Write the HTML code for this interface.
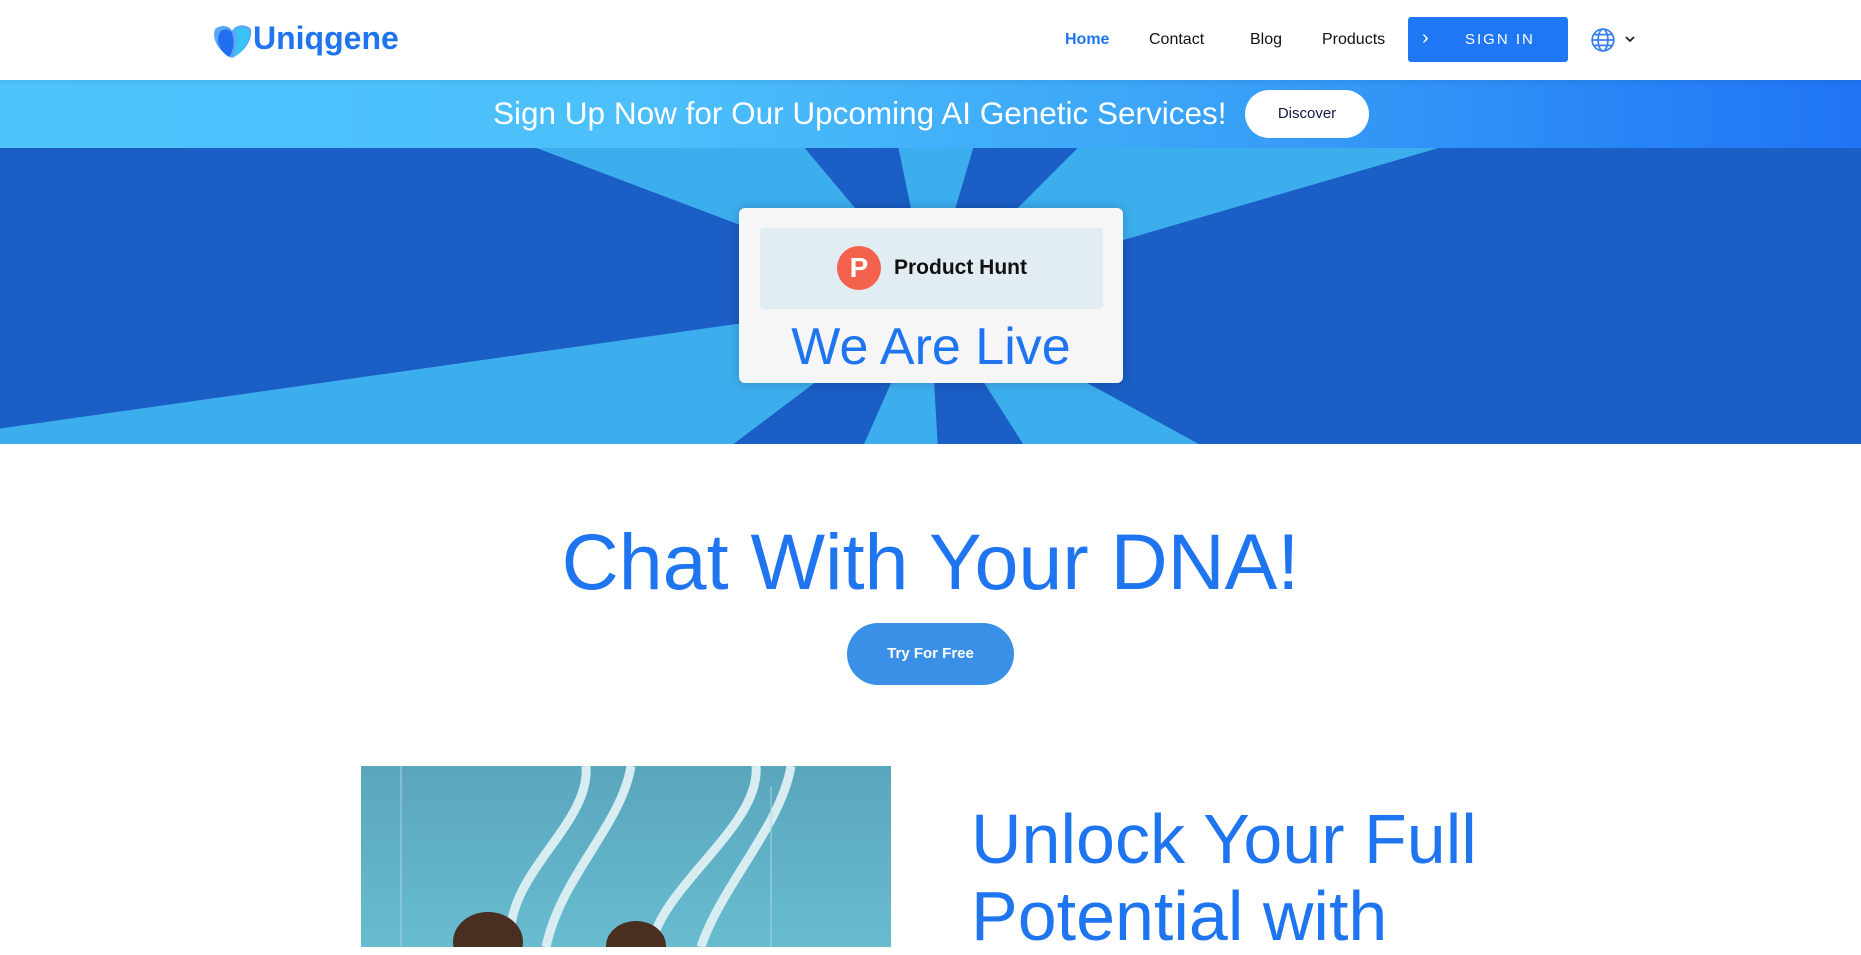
<!DOCTYPE html>
<html><head><meta charset="utf-8"><style>
*{margin:0;padding:0;box-sizing:border-box}
body{width:1861px;height:947px;overflow:hidden;background:#fff;font-family:"Liberation Sans",sans-serif;position:relative}
.abs{position:absolute}
nav a{position:absolute;top:31px;font-size:16px;color:#111;text-decoration:none}
</style></head><body>
<div class="abs" style="left:0;top:0;width:1861px;height:80px;background:#fff;box-shadow:0 2px 6px rgba(0,0,0,.08);z-index:2"></div>
<svg class="abs" style="left:211px;top:23px;z-index:3" width="42" height="36" viewBox="0 0 42 36">
<path d="M4 6 C12 0 20 4 21 8 C24 2 34 0 40 6 C42 18 32 30 21 35 C10 30 0 18 4 6Z" fill="#5aa6f7"/>
<path d="M10 8 C16 4 22 8 22 14 C24 24 20 32 18 34 C8 28 4 16 10 8Z" fill="#1f6ff0"/>
<path d="M24 6 C32 2 40 6 38 14 C36 24 28 32 22 34 C26 24 28 14 24 6Z" fill="#38c2f5"/>
</svg>
<div class="abs" style="left:253px;top:20px;font-size:32px;font-weight:bold;color:#1f74f0;z-index:3">Uniqgene</div>
<nav style="position:absolute;left:0;top:0;z-index:3">
<a style="left:1065px;color:#1f74f0;font-weight:bold">Home</a>
<a style="left:1149px">Contact</a>
<a style="left:1250px">Blog</a>
<a style="left:1322px">Products</a>
</nav>
<div class="abs" style="left:1408px;top:17px;width:160px;height:45px;background:#1f77f5;border-radius:3px;z-index:3;color:#fff;font-size:15px;letter-spacing:2px">
<span class="abs" style="left:14px;top:10px;font-size:20px;font-weight:100">›</span>
<span class="abs" style="left:57px;top:14px">SIGN IN</span></div>
<svg class="abs" style="left:1590px;top:27px;z-index:3" width="26" height="26" viewBox="0 0 24 24" fill="none" stroke="#3b7ff0" stroke-width="1.6">
<circle cx="12" cy="12" r="10"/><ellipse cx="12" cy="12" rx="4.5" ry="10"/><path d="M2 12h20M4 7h16M4 17h16"/></svg>
<svg class="abs" style="left:1624px;top:34px;z-index:3" width="12" height="10" viewBox="0 0 12 10"><path d="M2 3l4 4 4-4" stroke="#222" stroke-width="1.8" fill="none"/></svg>

<div class="abs" style="left:0;top:80px;width:1861px;height:68px;background:linear-gradient(90deg,#4fc4fc 0%,#4cbffb 35%,#3aa2f8 65%,#1f74f5 100%)"></div>
<div class="abs" style="left:493px;top:95px;font-size:31.5px;color:#fff;white-space:nowrap">Sign Up Now for Our Upcoming AI Genetic Services!</div>
<div class="abs" style="left:1245px;top:90px;width:124px;height:48px;background:#fff;border-radius:24px;font-size:15px;color:#111a44;text-align:center;line-height:48px">Discover</div>

<svg class="abs" style="left:0;top:148px" width="1861" height="296" viewBox="0 0 1568 249" preserveAspectRatio="none">
<rect width="1568" height="249" fill="#1b5ec5"/>
<g fill="#3caeee">
<polygon points="452,0 678,0 783,125"/>
<polygon points="757,0 820,0 783,125"/>
<polygon points="908,0 1212,0 783,125"/>
<polygon points="0,236 0,249 618,249 783,125"/>
<polygon points="728,249 790,249 783,125"/>
<polygon points="862,249 1010,249 783,125"/>
</g></svg>
<div class="abs" style="left:739px;top:208px;width:384px;height:175px;background:#f6f6f6;border-radius:6px;box-shadow:0 0 12px rgba(0,0,0,.2)">
<div class="abs" style="left:21px;top:20px;width:343px;height:81px;background:#e1ecf3;border-radius:4px">
<div class="abs" style="left:77px;top:18px;width:44px;height:44px;border-radius:50%;background:#f4614c;color:#fff;font-weight:bold;font-size:28px;text-align:center;line-height:44px">P</div>
<div class="abs" style="left:134px;top:28px;font-size:21px;font-weight:bold;color:#111">Product Hunt</div>
</div>
<div class="abs" style="left:0;top:109px;width:384px;text-align:center;font-size:52px;color:#1f74f0">We Are Live</div>
</div>

<div class="abs" style="left:0;top:516px;width:1861px;text-align:center;font-size:79px;color:#1f74f0">Chat With Your DNA!</div>
<div class="abs" style="left:847px;top:623px;width:167px;height:62px;background:#3a90e6;border-radius:31px;color:#fff;font-weight:bold;font-size:15px;text-align:center;line-height:62px">Try For Free</div>

<div class="abs" style="left:361px;top:766px;width:530px;height:181px;overflow:hidden;background:linear-gradient(180deg,#5aa6bd,#68bccf)">
<svg width="530" height="181" viewBox="0 0 530 181" fill="none" stroke="#d8edf2" stroke-width="9">
<path d="M225 0 C230 60 140 110 150 181"/><path d="M270 0 C260 60 200 110 185 181"/>
<path d="M395 0 C400 60 300 120 290 181" /><path d="M430 0 C420 60 360 120 340 181"/>
<path d="M40 0 V181 M410 20V181" stroke-width="1" stroke="#a8d6e0"/>
</svg>
<div class="abs" style="left:92px;top:146px;width:70px;height:60px;border-radius:50%;background:#4a2e22"></div>
<div class="abs" style="left:245px;top:155px;width:60px;height:50px;border-radius:50%;background:#4a2e22"></div>
</div>
<div class="abs" style="left:971px;top:801px;font-size:70px;line-height:77px;color:#1f74f0">Unlock Your Full<br>Potential with</div>
</body></html>
